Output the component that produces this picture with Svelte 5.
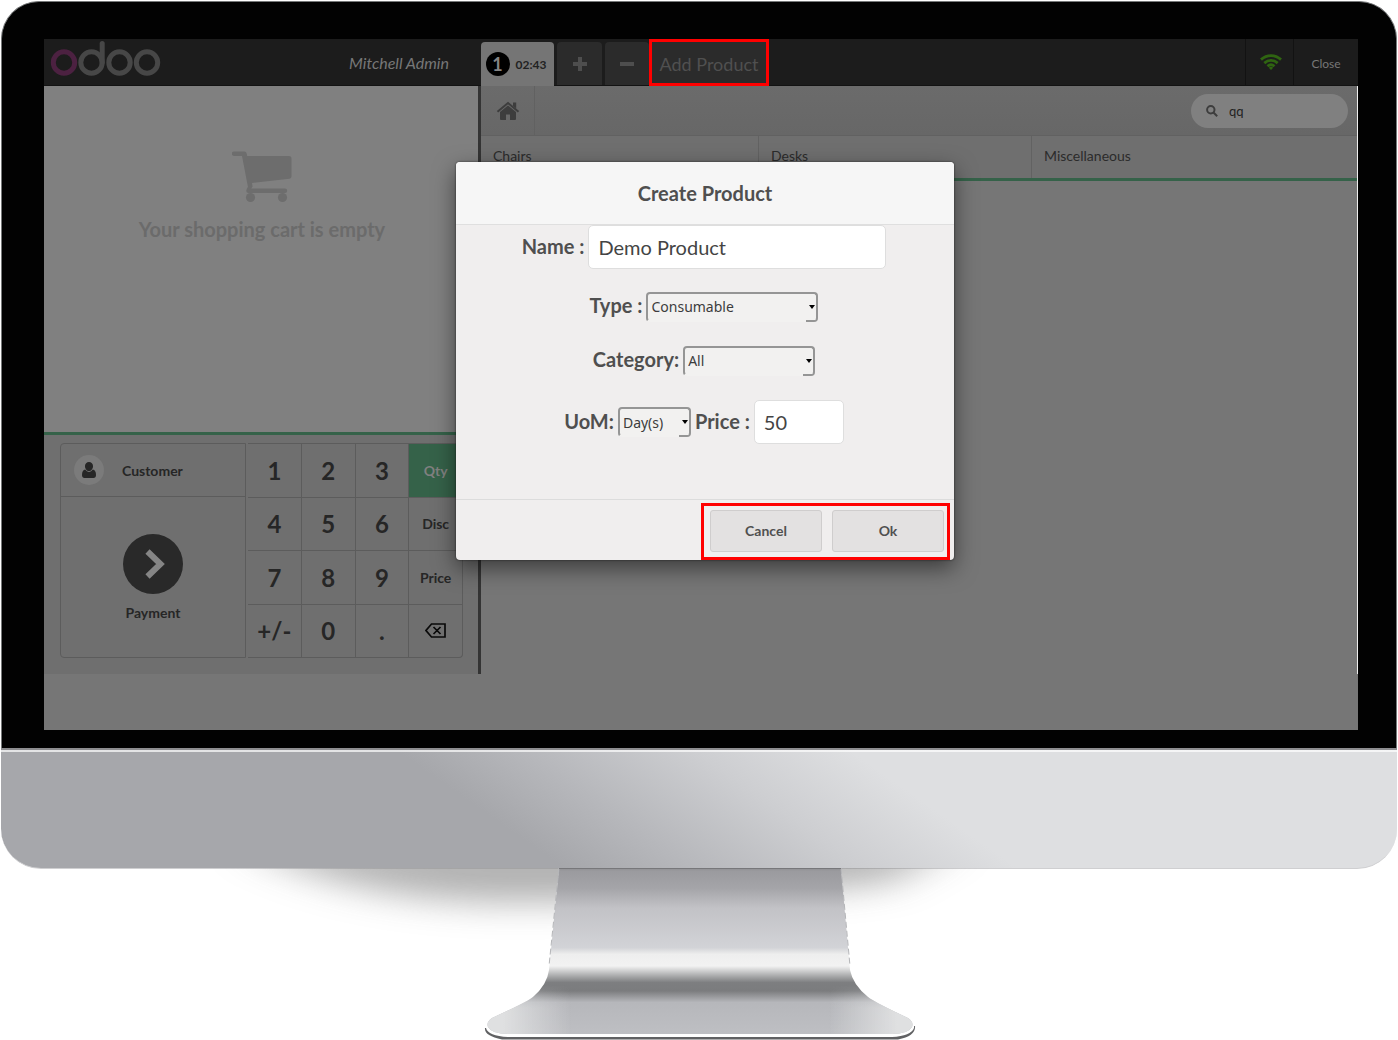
<script>
  let productName = $state('Demo Product');
  let type = $state('Consumable');
  let category = $state('All');
  let uom = $state('Day(s)');
  let price = $state('50');
  let query = $state('qq');
  const categories = ['Chairs', 'Desks', 'Miscellaneous'];
  const keys = ['1', '2', '3', 'Qty', '4', '5', '6', 'Disc', '7', '8', '9', 'Price', '+/-', '0', '.', 'del'];
  const modes = ['Qty', 'Disc', 'Price'];
</script>

<div class="monitor">
  <div class="bezel">
    <div class="screen">
      <div class="pos">
        <header class="topbar">
          <div class="brand">
            <svg class="logo" viewBox="0 0 112 38" role="img" aria-label="odoo">
              <g fill="none" stroke="#474747" stroke-width="5">
                <circle cx="14" cy="23.5" r="10.7" stroke="#4c2141" />
                <circle cx="41.5" cy="23.5" r="10.7" />
                <circle cx="69.5" cy="23.5" r="10.7" />
                <circle cx="97" cy="23.5" r="10.7" />
                <path d="M52.2 23.5V4.5" stroke-linecap="round" />
              </g>
            </svg>
            <span class="user">Mitchell Admin</span>
          </div>
          <div class="orders">
            <button class="tab active"><span class="num">1</span><span class="time">02:43</span></button>
            <button class="tab square" aria-label="New order">
              <svg width="14" height="14" viewBox="0 0 14 14"><path d="M7 0v14M0 7h14" stroke="#4e4e4e" stroke-width="4" /></svg>
            </button>
            <button class="tab square minus" aria-label="Delete order">
              <svg width="14" height="14" viewBox="0 0 14 14"><path d="M0 7h14" stroke="#4e4e4e" stroke-width="4" /></svg>
            </button>
            <button class="add">Add Product</button>
            <span class="wifi">
              <svg width="22" height="16" viewBox="0 0 22 16" fill="none" stroke="#2f6411" stroke-width="2.8" role="img" aria-label="Connected">
                <path d="M1 5.600C7 .2 15 .2 21 5.600M4.300 9.100c4-3.600 9.400-3.600 13.400 0M7.500 12.300c2.200-1.900 4.800-1.900 7 0" />
                <path d="M11 16l-2.200-2.200a3.200 3.200 0 0 1 4.400 0z" fill="#2f6411" stroke="none" />
              </svg>
            </span>
            <button class="close">Close</button>
          </div>
        </header>

        <main class="content">
          <section class="left">
            <div class="cart">
              <svg width="60" height="52" viewBox="0 0 60 52" fill="#6d6d6d" aria-hidden="true">
                <path d="M2 .5h10.500q1.800 0 2.200 2l.5 2.500H57q2.500 0 2.500 2.500v18q0 2-2 2.300L20 32l.6 3.500-1.300 2H53a2.200 2.200 0 0 1 0 4.400H16.500q-2.500 0-2.200-2.400.2-1.200 1.600-3.700L10 4.900H2A2.200 2.200 0 0 1 2 .5z" />
                <circle cx="18.500" cy="46.500" r="4.600" /><circle cx="50.500" cy="46.500" r="4.600" />
              </svg>
              <p>Your shopping cart is empty</p>
            </div>
            <div class="pads">
              <div class="actions">
                <button class="customer">
                  <span class="avatar">
                    <svg width="14" height="16" viewBox="0 0 14 16" fill="#262626"><path d="M7 0a4 4 0 0 1 4 4.200C11 6.600 9.300 9 7 9S3 6.600 3 4.200A4 4 0 0 1 7 0zM3.200 7.600Q4.700 10 7 10t3.800-2.400Q14 8.300 14 13q0 3-2.600 3H2.600Q0 16 0 13q0-4.700 3.200-5.400z" /></svg>
                  </span>
                  <span class="who">Customer</span>
                </button>
                <button class="payment">
                  <span class="go">
                    <svg width="20" height="30" viewBox="0 0 20 30"><path d="M2.500 2.500L15.500 15 2.500 27.500" fill="none" stroke="#858585" stroke-width="6" /></svg>
                  </span>
                  Payment
                </button>
              </div>
              <div class="numpad">
                {#each keys as key}
                  {#if key === 'del'}
                    <button aria-label="Backspace">
                      <svg width="21" height="15" viewBox="0 0 21 15" fill="none" stroke="#0a0a0a" stroke-width="1.700"><path d="M6.500 1H20v13H6.500L1 7.500zM8.500 4l7 7M15.500 4l-7 7" /></svg>
                    </button>
                  {:else}
                    <button class:mode={modes.includes(key)} class:selected={key === 'Qty'}>{key}</button>
                  {/if}
                {/each}
              </div>
            </div>
          </section>

          <section class="right">
            <div class="searchrow">
              <button class="home" aria-label="Home">
                <svg width="24" height="20" viewBox="0 0 24 20" fill="#3d3d3d"><path d="M12 4.500l8 6.600V18q0 1-1 1h-5v-5.500h-4V19H5q-1 0-1-1v-6.900z" /><path d="M1.500 10.800L12 2l10.500 8.800" fill="none" stroke="#3d3d3d" stroke-width="2" /><path d="M17 1.500h3.200v6L17 5z" /></svg>
              </button>
              <label class="search">
                <svg width="12" height="12" viewBox="0 0 12 12" fill="none" stroke="#3d3d3d" stroke-width="2"><circle cx="4.800" cy="4.800" r="3.700" /><path d="M7.500 7.500l3.700 3.700" /></svg>
                <input bind:value={query} aria-label="Search products" />
              </label>
            </div>
            <nav class="categories">
              {#each categories as name}<a href="#{name}">{name}</a>{/each}
            </nav>
          </section>
        </main>
      </div>

      <form class="modal" onsubmit={(e) => e.preventDefault()}>
        <h2>Create Product</h2>
        <div class="fields">
          <div class="row name">
            <label for="name">Name :</label>
            <input id="name" bind:value={productName} />
          </div>
          <div class="row type">
            <label for="type">Type :</label>
            <span class="drop"><select id="type" bind:value={type}><option>Consumable</option><option>Service</option></select></span>
          </div>
          <div class="row category">
            <label for="category">Category:</label>
            <span class="drop"><select id="category" bind:value={category}><option>All</option><option>Saleable</option></select></span>
          </div>
          <div class="row unit">
            <label for="uom">UoM:</label>
            <span class="drop"><select id="uom" bind:value={uom}><option>Day(s)</option><option>Unit(s)</option></select></span>
            <label for="price">Price :</label>
            <input id="price" bind:value={price} />
          </div>
        </div>
        <footer>
          <div class="choices">
            <button type="button">Cancel</button>
            <button type="submit">Ok</button>
          </div>
        </footer>
      </form>
    </div>
  </div>
  <div class="chin"></div>
</div>
<div class="base">
  <svg viewBox="199 868 1000 172" width="1000" height="172" aria-hidden="true">
    <defs>
      <linearGradient id="neck" x1="0" y1="868" x2="0" y2="1034" gradientUnits="userSpaceOnUse">
        <stop offset="0" stop-color="#8f8f92" /><stop offset=".02" stop-color="#9b9b9f" /><stop offset=".12" stop-color="#a4a4a8" />
        <stop offset=".24" stop-color="#c2c2c6" /><stop offset=".48" stop-color="#d2d3d7" />
        <stop offset=".52" stop-color="#eeeeee" /><stop offset=".59" stop-color="#f2f2f2" />
        <stop offset=".65" stop-color="#aaabac" /><stop offset=".69" stop-color="#7d7e80" /><stop offset=".74" stop-color="#7b7c7e" />
        <stop offset=".81" stop-color="#b6b7bb" /><stop offset="1" stop-color="#bebfc3" />
      </linearGradient>
      <linearGradient id="sheen" x1="485" y1="0" x2="915" y2="0" gradientUnits="userSpaceOnUse">
        <stop offset=".04" stop-color="#dfe0e1" /><stop offset=".2" stop-color="#dfe0e1" stop-opacity="0" />
        <stop offset=".8" stop-color="#dfe0e1" stop-opacity="0" /><stop offset=".96" stop-color="#dfe0e1" />
      </linearGradient>
      <linearGradient id="fade" x1="0" y1="985" x2="0" y2="1008" gradientUnits="userSpaceOnUse">
        <stop offset="0" stop-color="#fff" stop-opacity="0" /><stop offset="1" stop-color="#fff" />
      </linearGradient>
      <mask id="foot"><rect x="480" y="985" width="440" height="55" fill="url(#fade)" /></mask>
      <filter id="soft" x="-20%" y="-100%" width="140%" height="300%"><feGaussianBlur stdDeviation="24 17" /></filter>
    </defs>
    <path d="M240 840H960L890 882Q700 902 500 902Q340 899 240 840z" fill="#8c8c8c" opacity=".68" filter="url(#soft)" />
    <path d="M485 1028Q484 1036 502 1039.500H898Q916 1036 915 1026z" fill="#606163" />
    <path d="M559 868H841L850 970Q853 985 868 997Q876 1003 908 1018Q915 1022 914 1028Q911 1036 892 1037H508Q488 1036 486 1028Q485 1022 492 1018Q527 1002 533 997Q547 985 549 970z" fill="#fff" />
    <path d="M559 868H841L850 970Q853 985 868 997Q876 1003 908 1018Q914 1022 912 1027Q908 1034 892 1034H508Q492 1034 488 1027Q486 1022 492 1018Q527 1002 533 997Q547 985 549 970z" fill="url(#neck)" />
    <path d="M533 997Q527 1002 492 1018Q486 1022 488 1027Q492 1034 508 1034H892Q908 1034 912 1027Q914 1022 908 1018Q876 1003 868 997L855 985H545z" fill="url(#sheen)" mask="url(#foot)" />
    <path d="M559 868L549 966M841 868L850 966" stroke="#b4b5b8" stroke-dasharray="6 3" fill="none" />
    <path d="M559 868.500H841" stroke="#77777a" />
  </svg>
</div>

<style>
  :global(body) { margin: 0; background: #fff; font-family: Lato, 'Liberation Sans', sans-serif; }
  * { box-sizing: border-box; }
  button, input, select { font-family: inherit; margin: 0; }
  button { border: 0; padding: 0; background: none; color: inherit; cursor: pointer; }
  input { border: 0; outline: 0; min-width: 0; }
  svg { display: block; flex: none; }

  .monitor { padding: 1px 1px 0; }
  .bezel { background: #020202; border: 1px solid #77797a; border-width: 1px 1px 0; border-radius: 38px 38px 0 0; padding: 37px 38px 18px 42px; }
  .chin { height: 121px; border-top: 2px solid #8d8d90; border-bottom: 1px solid #cfcfd1; border-radius: 0 0 40px 40px;
    background: linear-gradient(#ffffffb0, #ffffffb0) top / 100% 2px no-repeat, linear-gradient(35deg, #a6a7ab 36%, #b6b7bb 44%, #cdced1 55%, #dedfe1 65%); }
  .base { display: flex; justify-content: center; overflow: hidden; margin-top: -1px; }

  .screen { position: relative; background: #767676; padding-bottom: 56px; }
  .pos { display: flex; flex-direction: column; }
  .topbar { display: flex; height: 47px; background: #1c1c1c; border-bottom: 1px solid #131313; }
  .brand { width: 437px; flex: none; display: flex; justify-content: space-between; align-items: center; padding: 0 32px 0 6px; }
  .logo { width: 112px; height: 38px; align-self: flex-start; }
  .user { font-size: 16px; line-height: 20px; font-style: italic; color: #777; padding-top: 2px; }
  .orders { flex: 1; display: flex; align-items: stretch; }
  .tab { margin: 3px 3px 0 0; border-radius: 4px 4px 0 0; background: #2b2b2b; display: flex; align-items: center; justify-content: center; }
  .tab.active { width: 73px; background: #757575; gap: 6px; color: #222; margin-bottom: -1px; padding-right: 3px; }
  .tab.square { width: 45px; }
  .tab.minus { margin-right: 0; width: 44px; }
  .num { width: 24px; height: 24px; border-radius: 50%; background: #000; color: #858585; font-size: 18px; line-height: 24px; font-weight: 700; }
  .time { font-size: 12px; font-weight: 700; }
  .add { width: 120px; margin-bottom: -1px; border: 3px solid #f00; background: #2b2b2b; color: #505050; font-size: 18px; padding-top: 2px; }
  .wifi { margin-left: auto; width: 49px; display: flex; align-items: center; justify-content: center; border-left: 1px solid #121212; border-right: 1px solid #121212; padding-left: 3px; }
  .close { width: 64px; color: #777; font-size: 12px; padding-top: 2px; }

  .content { display: flex; height: 588px; border-right: 1px solid #eee; }
  .left { width: 437px; flex: none; border-right: 3px solid #343434; display: flex; flex-direction: column; }
  .cart { flex: 1; background: #808080; display: flex; flex-direction: column; align-items: center; padding: 65px 0 0 2px; gap: 14px; color: #6b6b6b; }
  .cart p { margin: 0; font-size: 20px; line-height: 24px; font-weight: 700; }
  .pads { border-top: 3px solid #356249; background: #6f6f6f; padding: 8px 15px 16px 16px; display: flex; gap: 2px; height: 242px; color: #262626; }
  .actions { width: 186px; border: 1px solid #5c5c5c; border-radius: 4px 0 0 4px; display: flex; flex-direction: column; height: 215px; }
  .actions button { font-weight: 700; font-size: 14px; }
  .customer { height: 53px; border-bottom: 1px solid #5c5c5c; display: flex; align-items: center; padding: 0 13px; gap: 18px; }
  .avatar { width: 30px; height: 30px; border-radius: 50%; background: #7b7b7b; display: flex; align-items: center; justify-content: center; }
  .payment { flex: 1; display: flex; flex-direction: column; align-items: center; justify-content: center; gap: 10px; }
  .go { width: 60px; height: 60px; border-radius: 50%; background: #292929; display: flex; align-items: center; justify-content: center; padding-left: 4px; }
  .numpad { flex: 1; height: 215px; display: grid; grid-template-columns: repeat(4, 1fr); grid-template-rows: repeat(4, 1fr); border-top: 1px solid #5c5c5c; border-radius: 0 4px 4px 0; }
  .numpad button { border-right: 1px solid #5c5c5c; border-bottom: 1px solid #5c5c5c; font-size: 24px; font-weight: 700; display: flex; align-items: center; justify-content: center; }
  .numpad button:last-child { border-bottom-right-radius: 4px; }
  .numpad .mode { font-size: 14px; }
  .numpad .selected { background: #356249; color: #808080; }

  .right { flex: 1; }
  .searchrow { height: 50px; display: flex; justify-content: space-between; align-items: center; background: linear-gradient(#6b6b6b, #676767); border-bottom: 1px solid #616161; padding-right: 9px; }
  .home { width: 54px; height: 49px; border-right: 1px solid #616161; display: flex; align-items: center; justify-content: center; }
  .search { width: 157px; height: 34px; border-radius: 17px; background: #808080; display: flex; align-items: center; gap: 11px; padding: 0 15px; }
  .search input { background: none; color: #222; font-size: 13px; width: 100px; padding: 0; }
  .categories { display: grid; grid-template-columns: 278fr 273fr 325fr; height: 45px; background: #6f6f6f; border-bottom: 3px solid #356249; }
  .categories a { border-right: 1px solid #626262; padding: 0 12px; line-height: 40px; font-size: 14px; color: #2b2b2b; text-decoration: none; }
  .categories a:last-child { border-right: 0; }

  .modal { position: absolute; top: 123px; left: calc(50% - 245px); width: 498px; background: #f0eeee; border-radius: 4px; box-shadow: 0 8px 22px rgba(0, 0, 0, .5), 0 0 2px #222; color: #4f4f4f; }
  h2 { margin: 0; height: 63px; line-height: 62px; text-align: center; font-size: 20px; font-weight: 700; background: #f6f6f6; border-bottom: 1px solid #dfdfdf; border-radius: 4px 4px 0 0; }
  .fields { height: 274px; font-size: 20px; font-weight: 700; display: flex; flex-direction: column; padding-right: 2px; }
  .row { display: flex; align-items: center; justify-content: center; gap: 4px; }
  .row label { line-height: 28px; padding-bottom: 3px; }
  .row input { height: 44px; border: 1px solid #dedede; border-radius: 5px; background: #fff; color: #444; font-size: 20px; padding: 0 9px; }
  .type { margin-top: 22px; }
  .category { margin-top: 23px; }
  .unit { margin-top: 24px; }
  #name { width: 298px; }
  #price { width: 90px; }
  .drop { position: relative; display: flex; }
  .drop::after { content: ''; position: absolute; right: 3px; top: 13px; border: 4px solid transparent; border-width: 4px 3px 0; border-top-color: #000; pointer-events: none; }
  select { appearance: none; height: 30px; border: 2px solid #959595; border-bottom-color: transparent; border-radius: 4px; padding: 0 3px; color: #3c3c3c; font-family: 'Noto Sans', sans-serif; font-size: 14px;
    background: linear-gradient(#959595, #959595) right bottom / 12px 2px border-box no-repeat, #f2f1f0; }
  #type { width: 172px; }
  #category { width: 132px; }
  #uom { width: 73px; }
  footer { height: 61px; border-top: 1px solid #dcdcdc; display: flex; justify-content: flex-end; padding: 3px 4px 0 0; }
  .choices { border: 3px solid #f00; width: 249px; height: 57px; display: flex; gap: 10px; padding: 4px 3px 5px 6px; }
  .choices button { flex: 1; background: #e3e1e1; border: 1px solid #cfcdcd; border-radius: 3px; font-size: 14px; font-weight: 700; color: #505050; padding-bottom: 2px; }
</style>
